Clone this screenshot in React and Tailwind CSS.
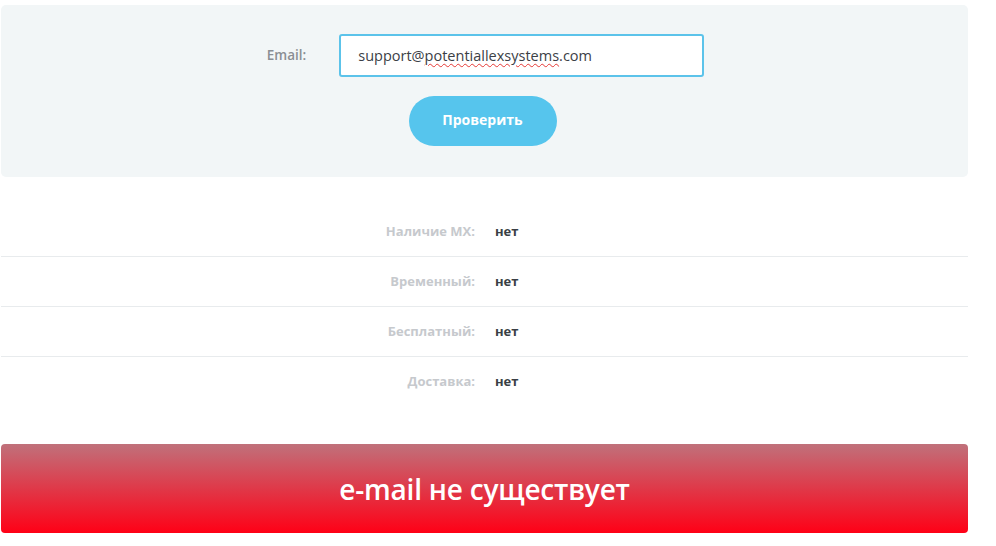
export default function App() {
  const rows = [
    ["Наличие MX:", "нет"],
    ["Временный:", "нет"],
    ["Бесплатный:", "нет"],
    ["Доставка:", "нет"],
  ];
  return (
    <div className="min-h-[546px] bg-white pt-[5px] pl-[1px]" style={{ fontFamily: '"Open Sans", "Noto Sans", sans-serif' }}>
      <div className="w-[967px]">
        <div className="h-[172px] rounded-[5px] bg-[#f2f6f7] pt-[29px] flex flex-col items-center">
          <div className="flex items-center ml-[2px]">
            <label className="text-[13.5px] font-semibold text-[#8a8e93] mr-[33px]">Email:</label>
            <div className="w-[365px] h-[43px] rounded-[3px] border-2 border-[#5cc3ea] bg-white flex items-center pl-[17px] text-[14.5px] text-[#3b4046]">
              support@<span className="underline decoration-wavy decoration-[#e53935] decoration-1 underline-offset-2">potentiallexsystems</span>.com
            </div>
          </div>
          <button className="mt-[19px] w-[148px] h-[50px] rounded-full bg-[#56c5ed] text-white text-[14px] font-bold ml-[-4px] pb-[3px]">
            Проверить
          </button>
        </div>
        <div className="mt-[30px]">
          {rows.map(([k, v], i) => (
            <div key={i} className={`h-[50px] flex items-center ${i < rows.length - 1 ? "border-b border-[#e8ebed]" : ""}`}>
              <div className="w-[474px] text-right text-[13px] font-bold text-[#c6c9cd]">{k}</div>
              <div className="ml-[20px] text-[13px] font-bold text-[#3a3f45]">{v}</div>
            </div>
          ))}
        </div>
        <div className="mt-[37px] h-[89px] rounded-[4px] bg-linear-to-b/srgb from-[#c0717b] to-[#ff0016] flex items-center justify-center">
          <span className="text-white text-[28px] font-semibold tracking-[-0.2px]">e-mail не существует</span>
        </div>
      </div>
    </div>
  );
}
